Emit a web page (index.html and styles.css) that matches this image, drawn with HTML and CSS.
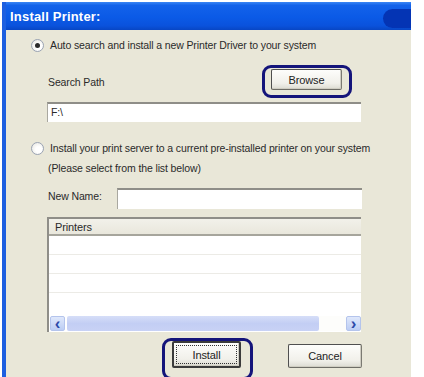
FILE: index.html
```html
<!DOCTYPE html>
<html lang="en">
<head>
    <meta charset="UTF-8">
    <title>Install Printer</title>
    <link rel="stylesheet" href="styles.css">
</head>
<body>
    <div class="window">
        <div class="titlebar">Install Printer:</div>
        <div class="content">
            <div class="option">
                <span class="radio checked"></span>
                <span>Auto search and install a new Printer Driver to your system</span>
            </div>
            <div class="search-row">
                <span class="label">Search Path</span>
                <span class="ring ring-browse"><button class="btn btn-browse">Browse</button></span>
            </div>
            <div class="field path">F:\</div>

            <div class="option option-2">
                <span class="radio"></span>
                <span>Install your print server to a current pre-installed printer on your system</span>
            </div>
            <div class="note">(Please select from the list below)</div>
            <div class="name-row">
                <span class="label">New Name:</span>
                <div class="field name"></div>
            </div>

            <div class="list">
                <div class="list-head">Printers</div>
                <div class="list-row"></div>
                <div class="list-row"></div>
                <div class="list-row"></div>
                <div class="list-row last"></div>
                <div class="hscroll">
                    <span class="arrow">&lsaquo;</span>
                    <span class="thumb"></span>
                    <span class="track"></span>
                    <span class="arrow">&rsaquo;</span>
                </div>
            </div>

            <div class="actions">
                <span class="ring ring-install"><button class="btn btn-install"><span class="focus">Install</span></button></span>
                <button class="btn btn-cancel">Cancel</button>
            </div>
        </div>
    </div>
</body>
</html>
```

FILE: styles.css
```css
* {
    margin: 0;
    padding: 0;
    box-sizing: border-box;
}

body {
    font-family: 'Liberation Sans', Arial, sans-serif;
    font-size: 10.5px;
    letter-spacing: -0.12px;
    color: #2a2a2a;
    background: #fff;
    overflow: hidden;
}

.window {
    width: 409px;
    height: 375px;
    margin: 2px 0 0 2px;
    border-left: 4px solid #1d5fe0;
    background: #e9e7d8;
}

/* XP style caption */
.titlebar {
    position: relative;
    height: 28px;
    padding: 7px 0 0 4px;
    font-size: 13px;
    font-weight: bold;
    color: #fff;
    letter-spacing: 0.2px;
    background: linear-gradient(#3a86f4 0%, #1362ea 12%, #0b5ae6 55%, #0a52dc 85%, #0846c4 100%);
    overflow: hidden;
}

.titlebar::after {
    content: '';
    position: absolute;
    right: -14px;
    top: 7px;
    width: 42px;
    height: 19px;
    border-radius: 14px 0 0 14px;
    background: #0434b4;
}

.content {
    padding: 8px 0 0 25px;
}

.option {
    display: flex;
    align-items: center;
    gap: 6px;
    height: 14px;
}

.option-2 {
    margin-top: 19px;
}

.radio {
    width: 13px;
    height: 13px;
    border-radius: 50%;
    border: 1px solid #9aa3b3;
    background: radial-gradient(circle at 60% 60%, #fff 30%, #e4e3dc 100%);
    display: flex;
    align-items: center;
    justify-content: center;
}

.radio.checked::after {
    content: '';
    width: 5px;
    height: 5px;
    border-radius: 50%;
    background: #2a2a2a;
}

.search-row {
    display: flex;
    align-items: center;
    justify-content: space-between;
    width: 294px;
    margin: 17px 0 0 17px;
}

.label {
    padding-top: 5px;
}

.field {
    height: 20px;
    background: #fff;
    border-top: 2px solid #8f8e88;
    border-left: 1px solid #a9a8a0;
    padding: 2px 3px;
}

.path {
    width: 314px;
    margin: 12px 0 0 16px;
}

.note {
    margin: 7px 0 0 17px;
    height: 14px;
}

.name-row {
    display: flex;
    align-items: center;
    gap: 15px;
    width: 314px;
    margin: 12px 0 0 17px;
}

.name-row .label {
    padding: 0 0 5px;
}

.name {
    flex: 1;
    height: 21px;
}

.list {
    width: 314px;
    margin: 8px 0 0 16px;
    background: #fff;
    border-top: 2px solid #8f8e88;
    border-left: 2px solid #8f8e88;
}

.list-head {
    height: 17px;
    padding: 2px 0 0 6px;
    font-size: 11px;
    background: linear-gradient(#f2f1ea, #e9e7dc);
    border-bottom: 2px solid #a6a59c;
}

.list-row {
    height: 19px;
    border-bottom: 1px solid #ecebe6;
}

.list-row.last {
    height: 21px;
    border-bottom: none;
}

.hscroll {
    display: flex;
    height: 17px;
    padding: 1px 0 1px 1px;
    margin-top: 1px;
    margin-bottom: 1px;
}

.arrow {
    width: 15px;
    display: flex;
    align-items: center;
    justify-content: center;
    font-size: 17px;
    font-weight: bold;
    line-height: 1;
    color: #2c48a8;
    background: linear-gradient(#dfe8fb, #bccdf4);
    border: 1px solid #b4c4ec;
    border-radius: 2px;
}

.thumb {
    width: 252px;
    margin-left: 2px;
    background: linear-gradient(#d6def8, #c3cef4 50%, #c8d2f5);
    border-radius: 2px;
}

.track {
    flex: 1;
    background: #fdfdfb;
}

.actions {
    display: flex;
    align-items: center;
    gap: 47px;
    margin: 9px 0 0 141px;
}

.btn {
    font-family: 'Liberation Sans', Arial, sans-serif;
    font-size: 11px;
    letter-spacing: -0.1px;
    color: #222;
    background: linear-gradient(#fdfdfb, #f1f0ea 70%, #dcdbd2);
    border: 1px solid #4f4f4f;
    border-right-color: #7b7a72;
    border-bottom-color: #6e6d66;
    border-radius: 2px;
    box-shadow: inset -1px -1px 0 #cfcdc2;
}

.btn-browse {
    width: 71px;
    height: 21px;
}

.btn-install {
    width: 69px;
    height: 27px;
    padding: 2px;
    border: 2px solid #3b3b3b;
}

.btn-install .focus {
    display: flex;
    align-items: center;
    justify-content: center;
    height: 100%;
    border: 1px dotted #333;
}

.btn-cancel {
    width: 74px;
    height: 24px;
    margin-top: 3px;
}

/* hand drawn highlight rings */
.ring {
    position: relative;
    display: flex;
}

.ring::after {
    content: '';
    position: absolute;
    border: 3px solid #14147a;
    border-radius: 9px;
}

.ring-browse::after {
    left: -9px;
    right: -10px;
    top: -4px;
    bottom: -8px;
}

.ring-install::after {
    left: -10px;
    right: -12px;
    top: -3px;
    bottom: -12px;
}
```
